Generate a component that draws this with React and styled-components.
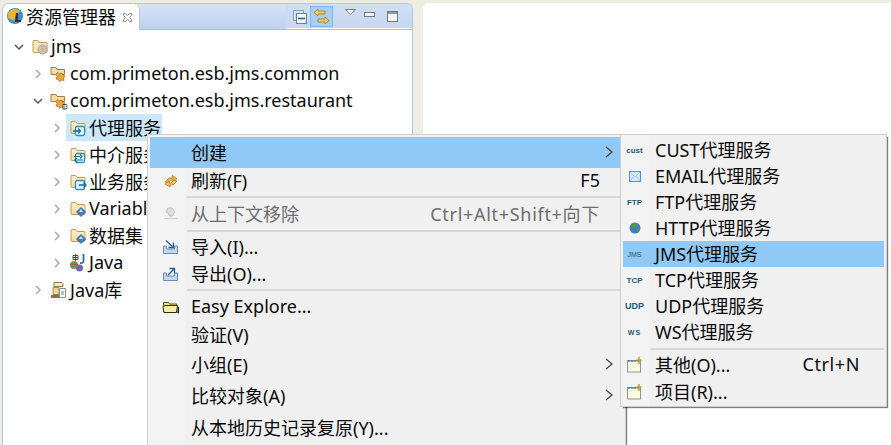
import React from 'react'
import styled, { createGlobalStyle } from 'styled-components'

const Global = createGlobalStyle`
  html, body { margin: 0; padding: 0; background: #efece3; overflow: hidden; }
  * { box-sizing: border-box; }
`

const font = `"Noto Sans", "Noto Sans CJK SC", sans-serif`

const Page = styled.div`
  width: 891px;
  height: 445px;
  position: relative;
  display: flex;
  gap: 10px;
  padding: 3px 0 0 2px;
  overflow: hidden;
  font-family: ${font};
  font-size: 18px;
  color: #0a0a0a;
`

const Panel = styled.div`
  width: 411px;
  height: 442px;
  background: #fff;
  border: 1px solid #b5c7e2;
  border-bottom: 0;
  border-radius: 6px 6px 0 0;
  overflow: hidden;
`

const Editor = styled.div`
  flex: 1;
  background: #fff;
  border-radius: 6px 0 0 0;
`

const Header = styled.div`
  height: 26px;
  display: flex;
  align-items: stretch;
  background: linear-gradient(#d6e3f5, #bdd1ef);
  border-bottom: 1px solid #aebfdb;
`

const Tab = styled.div`
  width: 137px;
  height: 26px;
  background: #fff;
  border-right: 1px solid #b5c7e2;
  border-radius: 6px 6px 0 0;
  display: flex;
  align-items: center;
  padding: 0 0 2px 3px;
  gap: 2px;
  flex: none;
`

const TabClose = styled.svg`
  margin: 2px 0 0 4px;
  flex: none;
`

const Toolbar = styled.div`
  margin-left: auto;
  width: 126px;
  display: flex;
  align-items: flex-start;
  padding: 2px 0 0 6px;
  background: linear-gradient(#cfdef4, #c6d8f2);
  border-bottom: 1px solid #fff;
`

const ToolButton = styled.div`
  width: ${(p) => p.$w}px;
  height: 21px;
  margin-right: ${(p) => p.$gap || 0}px;
  padding-bottom: ${(p) => p.$lift || 0}px;
  display: flex;
  align-items: center;
  justify-content: center;
  flex: none;
  background: ${(p) => (p.$active ? '#a9cef6' : 'transparent')};
  border: ${(p) => (p.$active ? '1px solid #80b6f0' : '0')};
`

const Tree = styled.div`
  padding-top: 3px;
`

const Row = styled.div`
  height: 27px;
  display: flex;
  align-items: center;
  padding-left: ${(p) => 10 + p.$level * 19}px;
  white-space: nowrap;
`

const Chevron = styled.svg`
  flex: none;
  width: 12px;
  height: 12px;
  margin-right: 3px;
`

const Label = styled.span`
  display: flex;
  align-items: center;
  height: 27px;
  gap: 2px;
  padding: 0 1px 2px 3px;
  background: ${(p) => (p.$selected ? '#cce8ff' : 'transparent')};

  svg {
    margin-top: 2px;
  }
`

const Menu = styled.div`
  position: absolute;
  top: 134px;
  background: linear-gradient(to right, #f3f3f3 ${(p) => p.$rail}px, #f0f0f0 ${(p) => p.$rail}px);
  border: 1px solid #cfcfcf;
  padding: 2px;
  box-shadow: 2px 2px 1px -1px rgba(0, 0, 0, 0.5);
`

const MainMenu = styled(Menu)`
  left: 147px;
  width: 479px;
  height: 330px;
`

const SubMenu = styled(Menu)`
  left: 620px;
  width: 267px;
  height: 273px;
`

const Item = styled.div`
  height: ${(p) => p.$h}px;
  padding-bottom: 2px;
  display: flex;
  align-items: center;
  background: ${(p) => (p.$active ? '#90c8f6' : 'transparent')};
  color: ${(p) => (p.$disabled ? '#6d6d6d' : '#0a0a0a')};
  white-space: nowrap;
`

const ItemIcon = styled.div`
  width: ${(p) => p.$w}px;
  padding-right: ${(p) => p.$pad}px;
  margin-top: 2px;
  flex: none;
  display: flex;
  justify-content: center;
  align-items: center;
`

const Shortcut = styled.span`
  margin-left: auto;
  margin-right: ${(p) => p.$right}px;
  letter-spacing: ${(p) => p.$track || 0}px;
`

const Arrow = styled.svg`
  margin-left: auto;
  margin-right: 9px;
  flex: none;
`

const Separator = styled.div`
  height: 2px;
  margin: ${(p) => p.$top || 1}px 0 ${(p) => p.$bottom || 1}px ${(p) => p.$left}px;
  background: #d7d7d7;
`

const Tiny = styled.span`
  font-family: "Liberation Sans", sans-serif;
  font-size: ${(p) => p.$s || 8}px;
  font-weight: ${(p) => p.$weight || 700};
  color: ${(p) => p.$color || '#1f5a78'};
  letter-spacing: ${(p) => p.$track || 0}px;
`

const Folder = ({ children }) => (
  <svg width="18" height="18" viewBox="0 0 18 18">
    <defs>
      <linearGradient id="fold" x1="0" y1="0" x2="0" y2="1">
        <stop offset="0" stopColor="#fdf0cf" />
        <stop offset="1" stopColor="#f6d99c" />
      </linearGradient>
    </defs>
    <path d="M2.500 2.500h4l1.500 2h7q1 0 1 1v8q0 1-1 1h-12q-1 0-1-1v-10q0-1 1.500-1z" fill="url(#fold)" stroke="#c69a55" />
    {children}
  </svg>
)

const PackageFolder = ({ badge }) => (
  <svg width="18" height="18" viewBox="0 0 18 18">
    <path d="M1 2.500h5l1 2h7.500v5H1z" fill="#f4dca8" stroke="#a87b3c" />
    <path d="M5.500 9.500l2.500-2 1.500 1.500 2.500-1 .5 2 2.500 1-1.500 2 .5 2.500-3-.5-1.500 1.500-1-2-2.500-.5 1-2.500z" fill="#e6a73f" stroke="#a0692a" strokeWidth=".7" />
    {badge && <path d="M13 12.500h3.500q1 1 0 2 1 1 0 2.500H13zM14.500 13.500v1M14.500 15.500v1" fill="#fff" stroke="#222" strokeWidth=".8" />}
  </svg>
)

const serviceBox = (
  <rect x="6.500" y="7.500" width="9" height="9" rx="1.500" fill="#e8f6fb" stroke="#1c93c0" strokeWidth="1.300" />
)

const TreeIcons = {
  project: (
    <svg width="18" height="18" viewBox="0 0 18 18">
      <path d="M2.500 2.500h4l1.500 2h7q1 0 1 1v8q0 1-1 1h-12q-1 0-1-1v-10q0-1 1.500-1z" fill="#fbe6b8" stroke="#c69a55" />
      <circle cx="11.500" cy="11.500" r="4.500" fill="#c4c4c4" stroke="#a5a5a5" />
      <path d="M10.500 8.500l3.500 3-3.500 2z" fill="#e7b54a" />
    </svg>
  ),
  proxy: (
    <Folder>
      {serviceBox}
      <path d="M4 12h7M9 9.500l2.500 2.500L9 14.500" fill="none" stroke="#0e6f98" strokeWidth="1.300" />
    </Folder>
  ),
  mediate: (
    <Folder>
      {serviceBox}
      <path d="M5 10.500h6M8 14h6M11 8.500l2 2-2 2M8 12l-2 2 2 2" fill="none" stroke="#0e6f98" strokeWidth="1.200" />
    </Folder>
  ),
  business: (
    <Folder>
      {serviceBox}
      <path d="M10 12h7M14.500 9.500l2.500 2.500-2.500 2.500" fill="none" stroke="#0e6f98" strokeWidth="1.300" />
    </Folder>
  ),
  data: (
    <Folder>
      <path d="M12 7.500l4.500 4.500-4.500 4.500-4.500-4.500z" fill="#3f83c0" stroke="#21598f" strokeWidth=".8" />
      <path d="M12 9l2 3h-4z" fill="#cfe6fa" />
    </Folder>
  ),
  java: (
    <svg width="18" height="18" viewBox="0 0 18 18">
      <path d="M4 1.500h5v4H4z" fill="none" stroke="#5a4a3a" />
      <path d="M6.500 0v7M4 3.500h5" stroke="#5a4a3a" />
      <path d="M14.500 0v7q0 2.500-3.500 2" fill="none" stroke="#2c6f9e" strokeWidth="1.800" />
      <circle cx="5" cy="11" r="4" fill="#5f9e5a" />
      <path d="M1 10.500h8" stroke="#c7503c" strokeWidth="1.500" />
      <circle cx="10.500" cy="14" r="3.500" fill="#7c62ab" />
    </svg>
  ),
  lib: (
    <svg width="18" height="18" viewBox="0 0 18 18">
      <path d="M4 1.500h8l1 1v3H4z" fill="#f6eecb" stroke="#8b7a3f" />
      <path d="M3 6.500h6v7H3z" fill="#f4d891" stroke="#a98d4a" />
      <path d="M1 14h9v3H1z" fill="#c2553c" />
      <path d="M3 14.500h7" stroke="#3f8e55" strokeWidth="1.500" />
      <path d="M9.500 7.500h6v9h-6z" fill="#fff" stroke="#88a" />
      <path d="M11 11h3M11 13h3" stroke="#557" strokeWidth=".8" />
    </svg>
  ),
}

const MenuIcons = {
  refresh: (
    <svg width="16" height="16" viewBox="0 0 16 16">
      <path d="M2 9l4-4h3V2.500l5 3-4 3.500V7H8L5 10.500z" fill="#e3b347" stroke="#a9781d" strokeWidth=".7" />
      <path d="M14 8l-4 4H7v2l-5-3 4-3v2h2l3-3z" fill="#e9c25f" stroke="#a9781d" strokeWidth=".7" />
    </svg>
  ),
  remove: (
    <svg width="16" height="16" viewBox="0 0 16 16">
      <path d="M5 2h4l3 4-2 2v2H6V8L3 6z" fill="#dcdcdc" stroke="#c2c2c2" />
      <path d="M1 12.500h14" stroke="#cfcfcf" />
    </svg>
  ),
  importer: (
    <svg width="17" height="16" viewBox="0 0 17 16">
      <path d="M1.500 7v7.500h14V7h-3v3h-8V7z" fill="#c5d7ef" stroke="#6b8cb8" />
      <path d="M4 1.500l6.500 6M11.500 3.500v5h-5" fill="none" stroke="#2a5d99" strokeWidth="1.300" />
    </svg>
  ),
  exporter: (
    <svg width="17" height="16" viewBox="0 0 17 16">
      <path d="M1.500 7v7.500h14V7h-3v3h-8V7z" fill="#c5d7ef" stroke="#6b8cb8" />
      <path d="M6 9l6-6M7.500 2.500h5v5" fill="none" stroke="#2a5d99" strokeWidth="1.300" />
    </svg>
  ),
  explore: (
    <svg width="17" height="14" viewBox="0 0 17 14">
      <path d="M1.500 2.500h5l1 1.500h7v8h-13z" fill="#f6e27a" stroke="#5b5320" />
      <path d="M1 7.500l1.500-2h13l-1 7H2z" fill="#fbee9e" stroke="#2f2c10" />
      <path d="M15.500 12.500h1V7" stroke="#111" strokeWidth="1.500" />
    </svg>
  ),
  mail: (
    <svg width="12" height="11" viewBox="0 0 12 11">
      <rect x=".5" y=".5" width="11" height="10" fill="#dbe8fb" stroke="#5a8bea" />
      <path d="M1 1l5 5 5-5M1 10l3.500-4.500M11 10L7.500 5.500" fill="none" stroke="#a8c4f0" />
    </svg>
  ),
  globe: (
    <svg width="12" height="12" viewBox="0 0 12 12">
      <circle cx="6" cy="6" r="5.500" fill="#3f7fc4" />
      <path d="M2 3l4-2 2 3-2 3-3-2zM8 7l3-1-1 3.500-2 1.500z" fill="#4f9a3f" />
    </svg>
  ),
  wizard: (
    <svg width="16" height="16" viewBox="0 0 16 16">
      <rect x=".5" y="3.500" width="13" height="11.500" fill="#fdf9df" stroke="#8a95a0" />
      <path d="M1 4h12" stroke="#3a78b0" strokeWidth="1.500" strokeDasharray="2 1" />
      <path d="M12 0v7M9.500 3h5" stroke="#c89a2a" strokeWidth="1.500" />
    </svg>
  ),
}

const Chev = ({ open }) => (
  <Chevron viewBox="0 0 12 12">
    {open ? (
      <path d="M2 4l4 4 4-4" fill="none" stroke="#555" strokeWidth="1.500" />
    ) : (
      <path d="M4 2l4 4-4 4" fill="none" stroke="#a8a8a8" strokeWidth="1.500" />
    )}
  </Chevron>
)

const treeRows = [
  { level: 0, open: true, icon: TreeIcons.project, text: 'jms' },
  { level: 1, icon: <PackageFolder />, text: 'com.primeton.esb.jms.common' },
  { level: 1, open: true, icon: <PackageFolder badge />, text: 'com.primeton.esb.jms.restaurant' },
  { level: 2, icon: TreeIcons.proxy, text: '代理服务', selected: true },
  { level: 2, icon: TreeIcons.mediate, text: '中介服务' },
  { level: 2, icon: TreeIcons.business, text: '业务服务' },
  { level: 2, icon: TreeIcons.data, text: 'Variables' },
  { level: 2, icon: TreeIcons.data, text: '数据集' },
  { level: 2, icon: TreeIcons.java, text: 'Java' },
  { level: 1, icon: TreeIcons.lib, text: 'Java库' },
]

const ArrowIcon = () => (
  <Arrow width="10" height="12" viewBox="0 0 10 12">
    <path d="M2 1L8 6l-6 5" fill="none" stroke="#444" strokeWidth="1.300" />
  </Arrow>
)

const mainItems = [
  { text: '创建', h: 31, active: true, arrow: true },
  { text: '刷新(F)', h: 26, icon: MenuIcons.refresh, shortcut: 'F5' },
  { sep: true, top: 2 },
  { text: '从上下文移除', h: 30, icon: MenuIcons.remove, disabled: true, shortcut: 'Ctrl+Alt+Shift+向下', track: 0.7 },
  { sep: true },
  { text: '导入(I)...', h: 27, icon: MenuIcons.importer },
  { text: '导出(O)...', h: 28, icon: MenuIcons.exporter },
  { sep: true },
  { text: 'Easy Explore...', h: 30, icon: MenuIcons.explore },
  { text: '验证(V)', h: 26 },
  { text: '小组(E)', h: 33, arrow: true },
  { text: '比较对象(A)', h: 30, arrow: true },
  { text: '从本地历史记录复原(Y)...', h: 33 },
]

const subItems = [
  { text: 'CUST代理服务', h: 26, icon: <Tiny $s={8}>cust</Tiny> },
  { text: 'EMAIL代理服务', h: 26, icon: MenuIcons.mail },
  { text: 'FTP代理服务', h: 26, icon: <Tiny $s={8}>FTP</Tiny> },
  { text: 'HTTP代理服务', h: 26, icon: MenuIcons.globe },
  { text: 'JMS代理服务', h: 26, active: true, icon: <Tiny $s={7} $weight={400}>JMS</Tiny> },
  { text: 'TCP代理服务', h: 26, icon: <Tiny $s={8}>TCP</Tiny> },
  { text: 'UDP代理服务', h: 26, icon: <Tiny $s={9}>UDP</Tiny> },
  { text: 'WS代理服务', h: 26, icon: <Tiny $s={7} $track={1}>WS</Tiny> },
  { sep: true, top: 3, bottom: 1 },
  { text: '其他(O)...', h: 27, icon: MenuIcons.wizard, shortcut: 'Ctrl+N', track: 0.6 },
  { text: '项目(R)...', h: 27, icon: MenuIcons.wizard },
]

const MenuList = ({ items, gutter, pad, right }) =>
  items.map((item, i) =>
    item.sep ? (
      <Separator key={i} $left={gutter - 4} $top={item.top} $bottom={item.bottom} />
    ) : (
      <Item key={i} $h={item.h} $active={item.active} $disabled={item.disabled}>
        <ItemIcon $w={gutter} $pad={pad}>{item.icon}</ItemIcon>
        {item.text}
        {item.shortcut && <Shortcut $right={right} $track={item.track}>{item.shortcut}</Shortcut>}
        {item.arrow && <ArrowIcon />}
      </Item>
    )
  )

export default function App() {
  return (
    <Page>
      <Global />
      <Panel>
        <Header>
          <Tab>
            <svg width="18" height="18" viewBox="0 0 18 18">
              <circle cx="9" cy="9" r="8" fill="#3f8ecf" />
              <path d="M2 6q5-7 12-2l-4 4-2 6-6-3z" fill="#f0b32f" />
              <path d="M10 6h2v7h3v2H9z" fill="#333" />
            </svg>
            资源管理器
            <TabClose width="11" height="11" viewBox="0 0 11 11">
              <path d="M1.500 1.500h2l2 2 2-2h2v2l-2 2 2 2v2h-2l-2-2-2 2h-2v-2l2-2-2-2z" fill="#fff" stroke="#8a8a8a" />
            </TabClose>
          </Tab>
          <Toolbar>
            <ToolButton $w={16} $gap={2}>
              <svg width="14" height="14" viewBox="0 0 14 14">
                <rect x=".5" y=".5" width="10" height="10" fill="#d8e2ef" stroke="#8fa2b8" />
                <rect x="3.500" y="3.500" width="10" height="10" fill="#f3f7fb" stroke="#6f8296" />
                <path d="M5 8.500h7" stroke="#1c5f8f" strokeWidth="1.500" />
              </svg>
            </ToolButton>
            <ToolButton $w={23} $gap={11} $active>
              <svg width="17" height="17" viewBox="0 0 17 17">
                <path d="M1 4.500L5 1v2h7v3H5v2z" fill="#f6cc5c" stroke="#a87a18" strokeWidth=".8" />
                <path d="M16 12.500L12 9v2H5v3h7v2z" fill="#f6cc5c" stroke="#a87a18" strokeWidth=".8" />
              </svg>
            </ToolButton>
            <ToolButton $w={12} $gap={8} $lift={9}>
              <svg width="11" height="6" viewBox="0 0 11 6">
                <path d="M.5.500h10L5.500 5.500z" fill="#fff" stroke="#7b7b7b" />
              </svg>
            </ToolButton>
            <ToolButton $w={11} $gap={12} $lift={4}>
              <svg width="11" height="5" viewBox="0 0 11 5">
                <rect x=".5" y=".5" width="10" height="4" fill="#f4f4f4" stroke="#777" />
              </svg>
            </ToolButton>
            <ToolButton $w={11}>
              <svg width="11" height="11" viewBox="0 0 11 11">
                <rect x=".5" y=".5" width="10" height="10" fill="#f4f4f4" stroke="#777" />
                <path d="M1 2h9" stroke="#777" strokeWidth="1.500" />
              </svg>
            </ToolButton>
          </Toolbar>
        </Header>
        <Tree>
          {treeRows.map((row) => (
            <Row key={row.text} $level={row.level}>
              <Chev open={row.open} />
              <Label $selected={row.selected}>
                {row.icon}
                {row.text}
              </Label>
            </Row>
          ))}
        </Tree>
      </Panel>
      <Editor />
      <MainMenu $rail={37}>
        <MenuList items={mainItems} gutter={41} pad={0} right={23} />
      </MainMenu>
      <SubMenu $rail={28}>
        <MenuList items={subItems} gutter={32} pad={9} right={24} />
      </SubMenu>
    </Page>
  )
}
